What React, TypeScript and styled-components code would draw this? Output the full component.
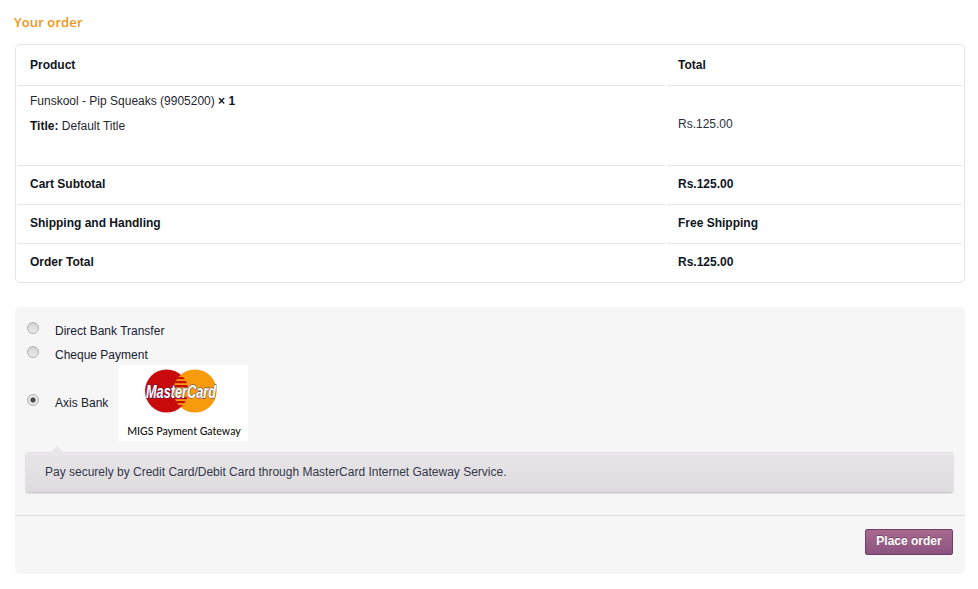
import React from "react";
import styled, { createGlobalStyle } from "styled-components";

const Global = createGlobalStyle`
  html, body { margin: 0; padding: 0; background: #fff; }
  body { font-family: "Liberation Sans", Arial, sans-serif; color: #1c2430; font-size: 12px; }
  #root { width: 978px; height: 589px; overflow: hidden; }
`;

const Page = styled.div`
  padding: 14px 13px 0 15px;
  display: flex;
  flex-direction: column;
`;

const Heading = styled.h3`
  margin: 0 0 14px -1px;
  font-family: "Open Sans", sans-serif;
  font-size: 13px;
  font-weight: 600;
  letter-spacing: 0.1px;
  line-height: 16px;
  color: #f0930f;
`;

const OrderCard = styled.div`
  height: 239px;
  box-sizing: border-box;
  border: 1px solid #e4e4e4;
  border-radius: 5px;
  padding: 0 2px;
  background: #fff;
  display: flex;
  flex-direction: column;
`;

const Row = styled.div<{ $h: number; $last?: boolean }>`
  height: ${(p) => p.$h}px;
  display: grid;
  grid-template-columns: 647px 1fr;
  column-gap: 3px;
  flex: none;
  & > div {
    border-bottom: ${(p) => (p.$last ? "0" : "1px solid #e4e4e4")};
  }
`;

const Cell = styled.div<{ $bold?: boolean }>`
  display: flex;
  align-items: center;
  padding-left: 12px;
  padding-bottom: ${(p) => (p.$bold ? "3px" : "0")};
  font-weight: ${(p) => (p.$bold ? 700 : 400)};
  color: ${(p) => (p.$bold ? "#10151c" : "#2a3038")};
`;

const HeaderCell = styled(Cell)`
  padding-bottom: 1px;
`;

const TotalHeader = styled(HeaderCell)`
  padding-left: 10px;
`;

const TotalCell = styled(Cell)`
  padding-left: 10px;
`;

const ProductCell = styled.div`
  padding: 8px 0 0 12px;
  display: flex;
  flex-direction: column;
  gap: 11px;
  line-height: 14px;
  color: #1f2630;
`;

const Strong = styled.b`
  color: #10151c;
`;

const PricePlain = styled.div`
  display: flex;
  align-items: center;
  padding: 0 0 4px 10px;
  color: #2a3038;
`;

const PaymentCard = styled.div`
  margin-top: 24px;
  height: 267px;
  border-radius: 5px;
  background: #f6f6f6;
  display: flex;
  flex-direction: column;
`;

const Methods = styled.div`
  padding: 12px 12px 0 12px;
  display: flex;
  flex-direction: column;
`;

const Method = styled.label<{ $h: number; $pull?: number }>`
  height: ${(p) => p.$h}px;
  margin-top: ${(p) => p.$pull ?? 0}px;
  display: flex;
  align-items: center;
  color: #172030;
`;

const Radio = styled.span<{ $on?: boolean }>`
  width: 10px;
  height: 10px;
  flex: none;
  margin-top: -6px;
  border-radius: 50%;
  border: 1px solid #b2b2b2;
  background: ${(p) =>
    p.$on
      ? "radial-gradient(circle, #4a4a4a 0 2.2px, #ececec 3px, #d4d4d4 100%)"
      : "linear-gradient(#d2d2d2, #ececec)"};
`;

const MethodName = styled.span`
  margin-left: 16px;
  min-width: 63px;
  flex: none;
  white-space: nowrap;
`;

const LogoCard = styled.div`
  width: 130px;
  height: 76px;
  background: #fff;
  flex: none;
`;

const Notice = styled.div`
  position: relative;
  margin: 11px 12px 0 11px;
  height: 40px;
  box-sizing: border-box;
  padding: 0 0 1px 19px;
  display: flex;
  align-items: center;
  border-radius: 2px;
  background: linear-gradient(#e8e6e8, #dedbde);
  box-shadow: 0 1px 2px rgba(0, 0, 0, 0.25);
  color: #33384a;
  &::before {
    content: "";
    position: absolute;
    left: 25px;
    top: -6px;
    border-left: 6px solid transparent;
    border-right: 6px solid transparent;
    border-bottom: 6px solid #e8e6e8;
  }
`;

const Footer = styled.div`
  margin-top: 23px;
  border-top: 1px solid #e0dcdf;
  padding: 13px 12px 0 0;
  display: flex;
  justify-content: flex-end;
`;

const PlaceOrder = styled.button`
  width: 88px;
  height: 26px;
  padding: 0 0 2px;
  border: 1px solid #6f3f68;
  border-radius: 2px;
  background: linear-gradient(#a9698f, #8a5480);
  color: #fff;
  font-family: "Liberation Sans", Arial, sans-serif;
  font-size: 12px;
  font-weight: 700;
  text-shadow: 0 -1px 0 rgba(0, 0, 0, 0.3);
`;

const MasterCardLogo = () => (
  <svg width="130" height="76" viewBox="0 0 130 76" role="img" aria-label="MasterCard MIGS Payment Gateway">
    <defs>
      <clipPath id="redDisc">
        <circle cx="48.6" cy="26" r="21.6" />
      </clipPath>
      <clipPath id="lens" clipPath="url(#redDisc)">
        <circle cx="77" cy="26" r="21.6" />
      </clipPath>
    </defs>
    <circle cx="48.6" cy="26" r="21.6" fill="#c90a0c" />
    <circle cx="77" cy="26" r="21.6" fill="#f79a0b" />
    <g clipPath="url(#lens)" fill="#c90a0c">
      <rect x="54" y="8" width="18" height="2.2" />
      <rect x="54" y="12" width="18" height="2.2" />
      <rect x="54" y="16" width="18" height="2.2" />
      <rect x="54" y="20" width="18" height="2.2" />
      <rect x="54" y="32" width="18" height="2.2" />
      <rect x="54" y="36" width="18" height="2.2" />
      <rect x="54" y="40" width="18" height="2.2" />
      <rect x="54" y="44" width="18" height="2.2" />
    </g>
    <text
      x="63"
      y="32.5"
      textAnchor="middle"
      fontFamily="'Liberation Sans', sans-serif"
      fontSize="18"
      fontStyle="italic"
      fontWeight="700"
      fill="#fff"
      stroke="#1c2f7a"
      strokeWidth="0.8"
      paintOrder="stroke"
      textLength="70"
      lengthAdjust="spacingAndGlyphs"
    >
      MasterCard
    </text>
    <text
      transform="translate(66 70) scale(0.88 1)"
      textAnchor="middle"
      fontFamily="Lato, sans-serif"
      fontSize="12"
      fontWeight="500"
      fill="#111"
    >
      MIGS Payment Gateway
    </text>
  </svg>
);

export default function App() {
  return (
    <Page>
      <Global />
      <Heading>Your order</Heading>
      <OrderCard>
        <Row $h={41}>
          <HeaderCell $bold>Product</HeaderCell>
          <TotalHeader $bold>Total</TotalHeader>
        </Row>
        <Row $h={80}>
          <ProductCell>
            <span>
              Funskool - Pip Squeaks (9905200) <Strong>× 1</Strong>
            </span>
            <span>
              <Strong>Title:</Strong> Default Title
            </span>
          </ProductCell>
          <PricePlain>Rs.125.00</PricePlain>
        </Row>
        <Row $h={39}>
          <Cell $bold>Cart Subtotal</Cell>
          <TotalCell $bold>Rs.125.00</TotalCell>
        </Row>
        <Row $h={39}>
          <Cell $bold>Shipping and Handling</Cell>
          <TotalCell $bold>Free Shipping</TotalCell>
        </Row>
        <Row $h={38} $last>
          <Cell $bold>Order Total</Cell>
          <TotalCell $bold>Rs.125.00</TotalCell>
        </Row>
      </OrderCard>
      <PaymentCard>
        <Methods>
          <Method $h={24}>
            <Radio />
            <MethodName>Direct Bank Transfer</MethodName>
          </Method>
          <Method $h={24}>
            <Radio />
            <MethodName>Cheque Payment</MethodName>
          </Method>
          <Method $h={76} $pull={-2}>
            <Radio $on />
            <MethodName>Axis Bank</MethodName>
            <LogoCard>
              <MasterCardLogo />
            </LogoCard>
          </Method>
        </Methods>
        <Notice>Pay securely by Credit Card/Debit Card through MasterCard Internet Gateway Service.</Notice>
        <Footer>
          <PlaceOrder>Place order</PlaceOrder>
        </Footer>
      </PaymentCard>
    </Page>
  );
}
